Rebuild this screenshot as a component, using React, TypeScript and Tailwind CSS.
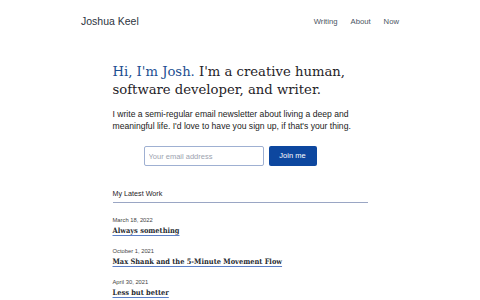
const posts = [
  { date: "March 18, 2022", title: "Always something" },
  { date: "October 1, 2021", title: "Max Shank and the 5-Minute Movement Flow" },
  { date: "April 30, 2021", title: "Less but better" },
];

const sans = { fontFamily: "'Liberation Sans', Arial, sans-serif" };
const serif = { fontFamily: "'DejaVu Serif', serif" };
const titleSerif = { fontFamily: "'DejaVu Serif Condensed', 'DejaVu Serif', serif" };

export default function App() {
  return (
    <div className="h-[300px] w-[480px] overflow-hidden bg-white text-[#1f2328]" style={sans}>
      <header className="mx-auto flex h-[16px] w-[318px] items-center justify-between mt-[14px]">
        <a className="text-[10.5px] text-[#2d3440]">Joshua Keel</a>
        <nav className="flex gap-[13px] text-[7.7px] text-[#4b5563]">
          <a>Writing</a>
          <a>About</a>
          <a>Now</a>
        </nav>
      </header>

      <main className="mx-auto mt-[33px] w-[255px]">
        <h1 className="text-[13.2px] leading-[18px]" style={serif}>
          <span className="text-[#1d4f91]">Hi, I'm Josh.</span> I'm a creative human, software
          developer, and writer.
        </h1>
        <p className="mt-[9px] text-[8.6px] leading-[12px] text-[#222]">
          I write a semi-regular email newsletter about living a deep and meaningful life. I'd love
          to have you sign up, if that's your thing.
        </p>

        <form className="mt-[14px] flex gap-[5px] pl-[31px]">
          <input
            placeholder="Your email address"
            className="h-[20px] w-[120px] rounded-[2px] border border-[#9fb0d2] px-[4px] text-[7.5px] placeholder:text-[#9ca3af]"
          />
          <button className="h-[20px] w-[48px] rounded-[2px] bg-[#0d479f] text-[7.5px] font-medium text-white">
            Join me
          </button>
        </form>

        <h2 className="mt-[22px] border-b border-[#9aa6c4] pb-[2px] text-[7.2px] leading-[12px]">
          My Latest Work
        </h2>

        <ul className="mt-[13px] flex flex-col gap-[11px]">
          {posts.map((p) => (
            <li key={p.title} className="flex flex-col items-start">
              <div className="text-[5.8px] leading-[9px] text-[#444]">{p.date}</div>
              <a
                className="text-[7.4px] font-bold leading-[11px] text-[#262a30] underline decoration-[#5b7fc7] underline-offset-[2px]"
                style={titleSerif}
              >
                {p.title}
              </a>
            </li>
          ))}
        </ul>
      </main>
    </div>
  );
}
